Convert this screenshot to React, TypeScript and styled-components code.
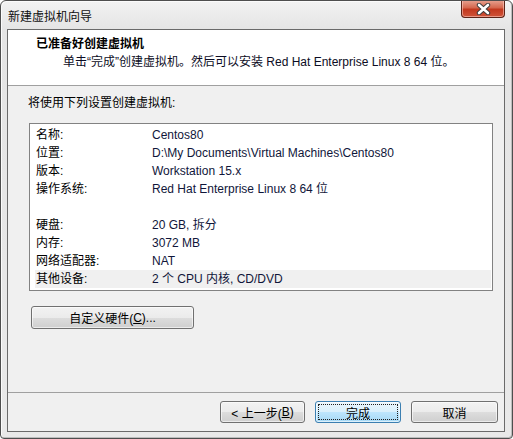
import React from "react";
import styled, { createGlobalStyle } from "styled-components";

const GlobalStyle = createGlobalStyle`
  html, body {
    margin: 0;
    padding: 0;
    background: #ffffff;
  }
  body {
    font-family: "Liberation Sans", "Noto Sans CJK SC", sans-serif;
    font-size: 12px;
    color: #000;
  }
`;

const Window = styled.div`
  box-sizing: border-box;
  width: 513px;
  height: 439px;
  display: flex;
  flex-direction: column;
  border: 1px solid #4e4e4e;
  border-radius: 6px 6px 4px 4px;
  background: linear-gradient(to bottom, #f2f2f2 0px, #e4e4e4 30px, #e9e9e9 100%);
  box-shadow: inset 1px 1px 0 #fbfbfb, inset -1px -1px 0 #bdbdbd;
  overflow: hidden;
`;

const TitleBar = styled.div`
  display: flex;
  justify-content: space-between;
  align-items: flex-start;
  height: 28px;
  padding-left: 7px;
  flex-shrink: 0;
`;

const TitleText = styled.span`
  align-self: center;
  font-size: 12px;
  color: #101010;
  margin-top: 1px;
`;

const CloseButton = styled.div`
  box-sizing: border-box;
  width: 44px;
  height: 18px;
  margin-top: -1px;
  margin-right: 7px;
  border: 1px solid #5c2418;
  border-top: none;
  border-radius: 0 0 4px 4px;
  background: linear-gradient(to bottom, #e8a493 0%, #d5684f 45%, #c2381e 55%, #d0553a 100%);
  box-shadow: inset 0 0 0 1px rgba(255, 210, 200, 0.55);
  display: flex;
  align-items: center;
  justify-content: center;
`;

const Client = styled.div`
  flex: 1;
  display: flex;
  flex-direction: column;
  margin: 0 7px 6px 6px;
  border: 1px solid #6a6a6a;
  background: #f0f0f0;
`;

const Header = styled.div`
  height: 56px;
  background: #ffffff;
  border-bottom: 1px solid #a0a0a0;
  display: flex;
  flex-direction: column;
  padding-left: 28px;
  box-sizing: border-box;
  padding-top: 6px;
`;

const HeaderTitle = styled.div`
  font-weight: bold;
  line-height: 16px;
  height: 18px;
`;

const HeaderSub = styled.div`
  padding-left: 27px;
  line-height: 16px;
  color: #0c0c24;
`;

const Body = styled.div`
  flex: 1;
  display: flex;
  flex-direction: column;
  padding: 9px 11px 0 20px;
`;

const Intro = styled.div`
  line-height: 16px;
  margin-bottom: 12px;
`;

const SummaryBox = styled.div`
  margin-left: 1px;
  height: 168px;
  box-sizing: border-box;
  border: 1px solid #828282;
  background: #ffffff;
  padding: 2px 1px 1px 5px;
  display: flex;
  flex-direction: column;
`;

const Row = styled.div<{ $selected?: boolean }>`
  display: grid;
  grid-template-columns: 116px 1fr;
  height: 18px;
  line-height: 18px;
  padding-left: 1px;
  background: ${(p) => (p.$selected ? "#f0f0f0" : "transparent")};
`;

const Label = styled.span`
  color: #000;
`;

const Value = styled.span`
  color: #10163a;
  white-space: nowrap;
`;

const Button = styled.button<{ $default?: boolean; $width: number; $height?: number }>`
  box-sizing: border-box;
  width: ${(p) => p.$width}px;
  height: ${(p) => p.$height ?? 23}px;
  padding: 0;
  font-family: "Liberation Sans", "Noto Sans CJK SC", sans-serif;
  font-size: 12px;
  color: #000;
  border: 1px solid ${(p) => (p.$default ? "#3c7fb1" : "#707070")};
  border-radius: 3px;
  background: ${(p) =>
    p.$default
      ? "linear-gradient(to bottom, #eaf6fd 0%, #d9f0fc 50%, #bee6fd 50%, #a7d9f5 100%)"
      : "linear-gradient(to bottom, #f2f2f2 0%, #ebebeb 50%, #dddddd 50%, #cfcfcf 100%)"};
  box-shadow: inset 0 0 0 1px rgba(255, 255, 255, 0.6);
  display: flex;
  align-items: center;
  justify-content: center;
  position: relative;
  cursor: default;
`;

const FocusRing = styled.span`
  position: absolute;
  inset: 2px;
  border: 1px dotted #202020;
  pointer-events: none;
`;

const Mnemonic = styled.span`
  text-decoration: underline;
`;

const CustomRow = styled.div`
  margin-top: 15px;
  padding-left: 3px;
`;

const Footer = styled.div`
  height: 39px;
  border-top: 1px solid #a0a0a0;
  display: flex;
  justify-content: flex-end;
  align-items: flex-start;
  padding: 8px 6px 0 0;
  gap: 10px;
  box-sizing: border-box;
`;

const rows: { label: string; value: string; selected?: boolean }[] = [
  { label: "名称:", value: "Centos80" },
  { label: "位置:", value: "D:\\My Documents\\Virtual Machines\\Centos80" },
  { label: "版本:", value: "Workstation 15.x" },
  { label: "操作系统:", value: "Red Hat Enterprise Linux 8 64 位" },
  { label: "", value: "" },
  { label: "硬盘:", value: "20 GB, 拆分" },
  { label: "内存:", value: "3072 MB" },
  { label: "网络适配器:", value: "NAT" },
  { label: "其他设备:", value: "2 个 CPU 内核, CD/DVD", selected: true },
];

export default function App() {
  return (
    <>
      <GlobalStyle />
      <Window>
        <TitleBar>
          <TitleText>新建虚拟机向导</TitleText>
          <CloseButton>
            <svg width="15" height="12" viewBox="0 0 15 12">
              <path
                d="M3 2 L12 10 M12 2 L3 10"
                stroke="#3a3a3a"
                strokeWidth="4.4"
                strokeLinecap="round"
              />
              <path
                d="M3 2 L12 10 M12 2 L3 10"
                stroke="#ffffff"
                strokeWidth="2.6"
                strokeLinecap="round"
              />
            </svg>
          </CloseButton>
        </TitleBar>
        <Client>
          <Header>
            <HeaderTitle>已准备好创建虚拟机</HeaderTitle>
            <HeaderSub>单击“完成”创建虚拟机。然后可以安装 Red Hat Enterprise Linux 8 64 位。</HeaderSub>
          </Header>
          <Body>
            <Intro>将使用下列设置创建虚拟机:</Intro>
            <SummaryBox>
              {rows.map((r, i) => (
                <Row key={i} $selected={r.selected}>
                  <Label>{r.label}</Label>
                  <Value>{r.value}</Value>
                </Row>
              ))}
            </SummaryBox>
            <CustomRow>
              <Button $width={163}>
                自定义硬件(<Mnemonic>C</Mnemonic>)...
              </Button>
            </CustomRow>
          </Body>
          <Footer>
            <Button $width={85} $height={22}>
              &lt; 上一步(<Mnemonic>B</Mnemonic>)
            </Button>
            <Button $width={86} $height={22} $default>
              <FocusRing />
              完成
            </Button>
            <Button $width={87} $height={22}>
              取消
            </Button>
          </Footer>
        </Client>
      </Window>
    </>
  );
}
